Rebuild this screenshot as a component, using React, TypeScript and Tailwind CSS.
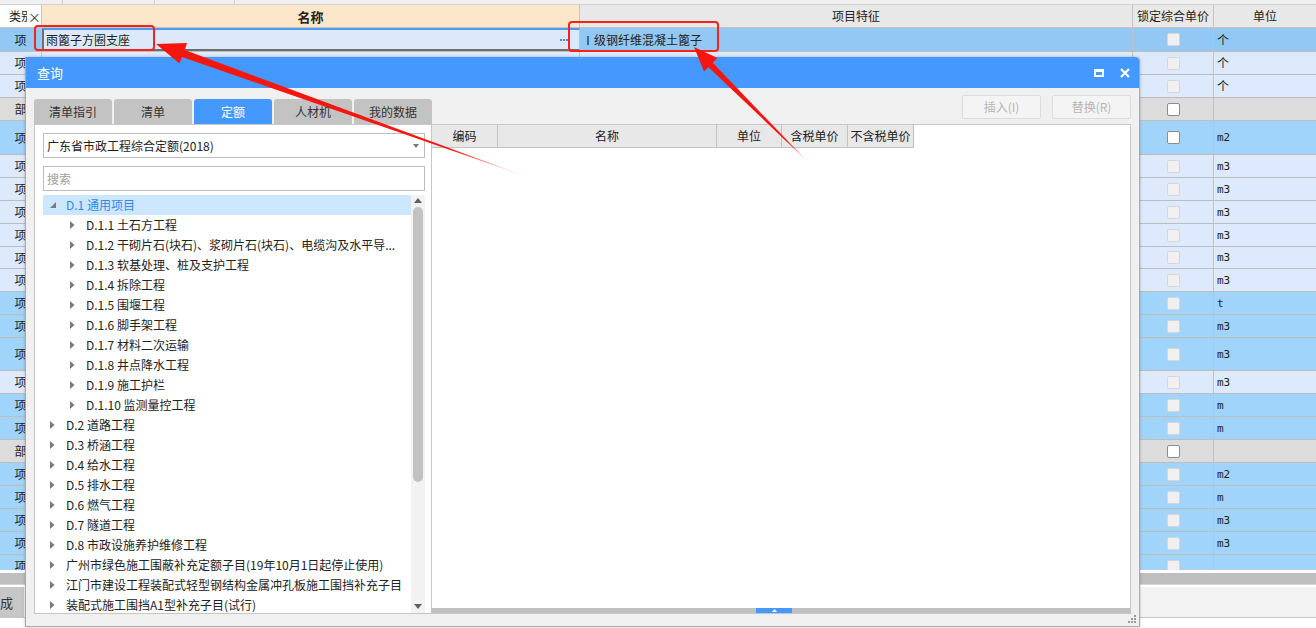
import React from 'react';

type Kind = 'sel' | 'light' | 'blue' | 'gray';
type RowT = { h: number; kind: Kind; cls: string; unit: string; cb: 'light' | 'white' };

const rows: RowT[] = [
  { h: 24, kind: 'sel', cls: '项', unit: '个', cb: 'light' },
  { h: 23, kind: 'light', cls: '项', unit: '个', cb: 'light' },
  { h: 23, kind: 'light', cls: '项', unit: '个', cb: 'light' },
  { h: 23, kind: 'gray', cls: '部', unit: '', cb: 'white' },
  { h: 34, kind: 'blue', cls: '项', unit: 'm2', cb: 'white' },
  { h: 23, kind: 'light', cls: '项', unit: 'm3', cb: 'light' },
  { h: 23, kind: 'light', cls: '项', unit: 'm3', cb: 'light' },
  { h: 23, kind: 'light', cls: '项', unit: 'm3', cb: 'light' },
  { h: 23, kind: 'light', cls: '项', unit: 'm3', cb: 'light' },
  { h: 22, kind: 'light', cls: '项', unit: 'm3', cb: 'light' },
  { h: 23, kind: 'light', cls: '项', unit: 'm3', cb: 'light' },
  { h: 23, kind: 'blue', cls: '项', unit: 't', cb: 'light' },
  { h: 23, kind: 'blue', cls: '项', unit: 'm3', cb: 'light' },
  { h: 33, kind: 'blue', cls: '项', unit: 'm3', cb: 'light' },
  { h: 23, kind: 'light', cls: '项', unit: 'm3', cb: 'light' },
  { h: 23, kind: 'blue', cls: '项', unit: 'm', cb: 'light' },
  { h: 23, kind: 'blue', cls: '项', unit: 'm', cb: 'light' },
  { h: 23, kind: 'gray', cls: '部', unit: '', cb: 'white' },
  { h: 23, kind: 'blue', cls: '项', unit: 'm2', cb: 'light' },
  { h: 23, kind: 'blue', cls: '项', unit: 'm', cb: 'light' },
  { h: 23, kind: 'blue', cls: '项', unit: 'm3', cb: 'light' },
  { h: 23, kind: 'blue', cls: '项', unit: 'm3', cb: 'light' },
  { h: 23, kind: 'blue', cls: '项', unit: '', cb: 'light' },
];

const bgOf: Record<Kind, string> = {
  sel: 'bg-[#93c8f4]',
  light: 'bg-[#dde9fc]',
  blue: 'bg-[#a0d4fa]',
  gray: 'bg-[#dcdcdc]',
};

const tree: { level: number; text: string; sel?: boolean; open?: boolean }[] = [
  { level: 0, text: 'D.1 通用项目', sel: true, open: true },
  { level: 1, text: 'D.1.1 土石方工程' },
  { level: 1, text: 'D.1.2 干砌片石(块石)、浆砌片石(块石)、电缆沟及水平导...' },
  { level: 1, text: 'D.1.3 软基处理、桩及支护工程' },
  { level: 1, text: 'D.1.4 拆除工程' },
  { level: 1, text: 'D.1.5 围堰工程' },
  { level: 1, text: 'D.1.6 脚手架工程' },
  { level: 1, text: 'D.1.7 材料二次运输' },
  { level: 1, text: 'D.1.8 井点降水工程' },
  { level: 1, text: 'D.1.9 施工护栏' },
  { level: 1, text: 'D.1.10 监测量控工程' },
  { level: 0, text: 'D.2 道路工程' },
  { level: 0, text: 'D.3 桥涵工程' },
  { level: 0, text: 'D.4 给水工程' },
  { level: 0, text: 'D.5 排水工程' },
  { level: 0, text: 'D.6 燃气工程' },
  { level: 0, text: 'D.7 隧道工程' },
  { level: 0, text: 'D.8 市政设施养护维修工程' },
  { level: 0, text: '广州市绿色施工围蔽补充定额子目(19年10月1日起停止使用)' },
  { level: 0, text: '江门市建设工程装配式轻型钢结构金属冲孔板施工围挡补充子目' },
  { level: 0, text: '装配式施工围挡A1型补充子目(试行)' },
];

function Checkbox({ kind }: { kind: 'light' | 'white' }) {
  return (
    <div
      className={
        kind === 'white'
          ? 'w-[13px] h-[13px] rounded-[2px] bg-white border border-[#8c8c8c]'
          : 'w-[13px] h-[13px] rounded-[2px] bg-[#f0f0f0] border border-[#d6d6d6]'
      }
    />
  );
}

function Closed() {
  return (
    <svg width="5" height="8" viewBox="0 0 5 8">
      <path d="M0 0 L4.5 4 L0 8 Z" fill="#7a7a7a" />
    </svg>
  );
}

function Opened() {
  return (
    <svg width="6" height="6" viewBox="0 0 6 6">
      <path d="M6 0 L6 6 L0 6 Z" fill="#7a7a7a" />
    </svg>
  );
}

export default function App() {
  return (
    <div className="relative w-[1316px] h-[628px] overflow-hidden bg-white text-[12px] text-[#222] font-['Noto_Sans_CJK_SC',sans-serif] leading-none">
      {/* top strip */}
      <div className="flex h-[5px] bg-[#f0f0f0] border-b border-[#d2d2d2]">
        <div className="w-[63px] border-r border-[#cfcfcf]" />
        <div className="w-[92px] border-r border-[#cfcfcf]" />
        <div className="w-[80px] border-r border-[#cfcfcf]" />
        <div className="flex-1" />
      </div>
      {/* header */}
      <div className="grid grid-cols-[42px_538px_553px_81px_102px] h-[23px] border-b border-[#c4c4c4]">
        <div className="bg-white border-r border-[#c4c4c4] flex items-center pl-[9px]">
          <span className="w-[20px] overflow-hidden whitespace-nowrap">类别</span>
          <span className="ml-[1px] text-[13px] text-[#333]">×</span>
        </div>
        <div className="bg-[#fde7cb] border-r border-[#c4c4c4] flex items-center justify-center font-bold text-[13px]">名称</div>
        <div className="bg-[#e8e8e8] border-r border-[#c4c4c4] flex items-center justify-center">项目特征</div>
        <div className="bg-[#e8e8e8] border-r border-[#c4c4c4] flex items-center justify-center">锁定综合单价</div>
        <div className="bg-[#e8e8e8] flex items-center justify-center">单位</div>
      </div>
      {/* body */}
      <div className="h-[542px] overflow-hidden flex flex-col">
        {rows.map((r, i) => (
          <div
            key={i}
            className={`grid grid-cols-[42px_538px_553px_81px_102px] shrink-0 border-b border-[#bdbdbd] ${bgOf[r.kind]}`}
            style={{ height: r.h }}
          >
            <div className="border-r border-[#c2c2c2] flex items-center justify-center">{r.cls}</div>
            {i === 0 ? (
              <div className="bg-[#dce9fb] border-t-2 border-t-[#4a9cf0] border-l-2 border-l-[#6e6e6e] border-b-2 border-b-[#6e6e6e] border-r border-r-[#c2c2c2] flex items-center justify-between pl-[2px] pr-[11px]">
                <span>雨篦子方圈支座</span>
                <div className="flex gap-[1px] mt-[1px]">
                  <div className="w-[2px] h-[2px] bg-[#3d8fe0]" />
                  <div className="w-[2px] h-[2px] bg-[#3d8fe0]" />
                  <div className="w-[2px] h-[2px] bg-[#3d8fe0]" />
                </div>
              </div>
            ) : (
              <div className="border-r border-[#c2c2c2]" />
            )}
            {i === 0 ? (
              <div className="border-r border-[#c2c2c2] flex items-center pl-[2px]">Ⅰ级钢纤维混凝土篦子</div>
            ) : (
              <div className="border-r border-[#c2c2c2]" />
            )}
            <div className="border-r border-[#c2c2c2] flex items-center justify-center">
              <Checkbox kind={r.cb} />
            </div>
            <div className="flex items-center pl-[3px] font-['DejaVu_Sans_Mono',monospace] text-[11px]">
              {r.unit === '个' ? <span className="font-['Noto_Sans_CJK_SC',sans-serif] text-[12px]">个</span> : r.unit}
            </div>
          </div>
        ))}
      </div>
      <div className="h-[3px] bg-white" />
      <div className="h-[12px] bg-[#bebebe] border-b border-[#d6d6d6]" />
      <div className="h-[2px] bg-white" />
      <div className="h-[31px] flex border-b border-[#c6c6c6]">
        <div className="w-[24px] bg-[#c6c6c6] flex items-center text-[13px] text-[#333]">成</div>
        <div className="flex-1 bg-[#f3f3f3]" />
      </div>

      {/* dialog */}
      <div className="absolute left-[25px] top-[57px] w-[1115px] h-[570px] bg-[#f0f0f0] border border-[#a9a9a9] border-t-0 rounded-tr-[4px] flex flex-col shadow-[0_0_3px_rgba(0,0,0,0.25)]">
        <div className="h-[31px] bg-[#4599fe] rounded-tr-[4px] flex items-center justify-between pl-[11px] pr-[9px]">
          <span className="text-white text-[13px]">查询</span>
          <div className="flex items-center gap-[16px]">
            <div className="w-[10px] h-[8px] border-2 border-t-[3px] border-white" />
            <svg width="10" height="10" viewBox="0 0 10 10">
              <path d="M1 1 L9 9 M9 1 L1 9" stroke="white" strokeWidth="2.2" />
            </svg>
          </div>
        </div>
        <div className="h-[36px] flex justify-between px-[8px]">
          <div className="flex items-end gap-[2px]">
            {['清单指引', '清单', '定额', '人材机', '我的数据'].map((t) => (
              <div
                key={t}
                className={
                  t === '定额'
                    ? 'w-[78px] h-[25px] rounded-t-[3px] bg-[#4599fe] text-white flex items-center justify-center'
                    : 'w-[78px] h-[25px] rounded-t-[3px] bg-[#c3c3c3] text-[#333] flex items-center justify-center'
                }
              >
                {t}
              </div>
            ))}
          </div>
          <div className="flex gap-[11px] pt-[7px]">
            <div className="w-[79px] h-[24px] rounded-[2px] border border-[#dcdcdc] bg-[#f4f4f4] text-[#b4b4b4] flex items-center justify-center">插入(I)</div>
            <div className="w-[79px] h-[24px] rounded-[2px] border border-[#dcdcdc] bg-[#f4f4f4] text-[#b4b4b4] flex items-center justify-center">替换(R)</div>
          </div>
        </div>
        <div className="h-[490px] flex px-[8px]">
          {/* left panel */}
          <div className="w-[398px] bg-white border border-[#c6c6c6] pt-[8px] pl-[8px] flex flex-col">
            <div className="w-[382px] h-[25px] border border-[#bdbdbd] flex items-center justify-between pl-[3px] pr-[5px]">
              <span>广东省市政工程综合定额(2018)</span>
              <svg width="6" height="4" viewBox="0 0 6 4">
                <path d="M0 0 L6 0 L3 4 Z" fill="#7a7a7a" />
              </svg>
            </div>
            <div className="w-[382px] h-[25px] mt-[8px] border border-[#bdbdbd] flex items-center pl-[3px] text-[#a0a0a0]">搜索</div>
            <div className="w-[382px] flex-1 mt-[4px] flex overflow-hidden">
              <div className="w-[368px] flex flex-col">
                {tree.map((n, i) => (
                  <div
                    key={i}
                    className={`h-[20px] shrink-0 flex items-center whitespace-nowrap ${n.sel ? 'bg-[#cce7fd] text-[#2f8ae6]' : ''} ${n.level === 0 ? 'pl-[7px]' : 'pl-[27px]'}`}
                  >
                    <div className="w-[16px] flex items-center">{n.open ? <Opened /> : <Closed />}</div>
                    <span>{n.text}</span>
                  </div>
                ))}
              </div>
              <div className="w-[14px] bg-[#f2f2f2] flex flex-col items-center">
                <svg className="mt-[3px]" width="8" height="5" viewBox="0 0 8 5">
                  <path d="M0 5 L4 0 L8 5 Z" fill="#606060" />
                </svg>
                <div className="w-[10px] h-[275px] mt-[4px] rounded-full bg-[#c2c2c2]" />
                <div className="flex-1" />
                <svg className="mb-[4px]" width="8" height="5" viewBox="0 0 8 5">
                  <path d="M0 0 L8 0 L4 5 Z" fill="#606060" />
                </svg>
              </div>
            </div>
          </div>
          {/* right panel */}
          <div className="flex-1 bg-white border-y border-r border-[#c6c6c6] flex flex-col">
            <div className="flex h-[23px]">
              {[
                ['编码', 66],
                ['名称', 219],
                ['单位', 65],
                ['含税单价', 66],
                ['不含税单价', 66],
              ].map(([t, w]) => (
                <div
                  key={t as string}
                  className="bg-[#e8e8e8] border-r border-b border-[#c2c2c2] flex items-center justify-center text-[#222]"
                  style={{ width: w as number }}
                >
                  {t}
                </div>
              ))}
            </div>
            <div className="flex-1" />
            <div className="h-[5px] bg-[#c0c0c0] flex">
              <div className="w-[324px]" />
              <div className="w-[36px] bg-[#4599fe] flex items-center justify-center">
                <svg width="5" height="3" viewBox="0 0 5 3">
                  <path d="M0 3 L2.5 0 L5 3 Z" fill="white" />
                </svg>
              </div>
            </div>
          </div>
        </div>
        <div className="flex-1 flex justify-end items-end pr-[2px] pb-[2px]">
          <svg width="9" height="9" viewBox="0 0 9 9">
            <rect x="6" y="0" width="2" height="2" fill="#9a9a9a" />
            <rect x="3" y="3" width="2" height="2" fill="#9a9a9a" />
            <rect x="6" y="3" width="2" height="2" fill="#9a9a9a" />
            <rect x="0" y="6" width="2" height="2" fill="#9a9a9a" />
            <rect x="3" y="6" width="2" height="2" fill="#9a9a9a" />
            <rect x="6" y="6" width="2" height="2" fill="#9a9a9a" />
          </svg>
        </div>
      </div>

      {/* annotations */}
      <div className="absolute left-[34px] top-[25px] w-[121px] h-[26px] border-2 border-[#f5231b] rounded-[4px] pointer-events-none" />
      <div className="absolute left-[568px] top-[21px] w-[151px] h-[31px] border-2 border-[#f5231b] rounded-[4px] pointer-events-none" />
      <svg className="absolute left-0 top-0 pointer-events-none" width="1316" height="628" viewBox="0 0 1316 628">
        <defs>
          <linearGradient id="g1" gradientUnits="userSpaceOnUse" x1="157" y1="44" x2="522" y2="175">
            <stop offset="0" stopColor="#f5170f" />
            <stop offset="0.8" stopColor="#f5170f" />
            <stop offset="1" stopColor="#f5170f" stopOpacity="0.15" />
          </linearGradient>
          <linearGradient id="g2" gradientUnits="userSpaceOnUse" x1="694" y1="47" x2="808" y2="162">
            <stop offset="0" stopColor="#f5170f" />
            <stop offset="0.8" stopColor="#f5170f" />
            <stop offset="1" stopColor="#f5170f" stopOpacity="0.15" />
          </linearGradient>
        </defs>
        <polygon
          points="156,44 187,43 184.8,50 522,175 182,57 179.5,63.5"
          fill="url(#g1)"
        />
        <polygon
          points="694,47 717.5,58 712.8,62.8 808,162 708.4,67.2 704,71.5"
          fill="url(#g2)"
        />
      </svg>
    </div>
  );
}
